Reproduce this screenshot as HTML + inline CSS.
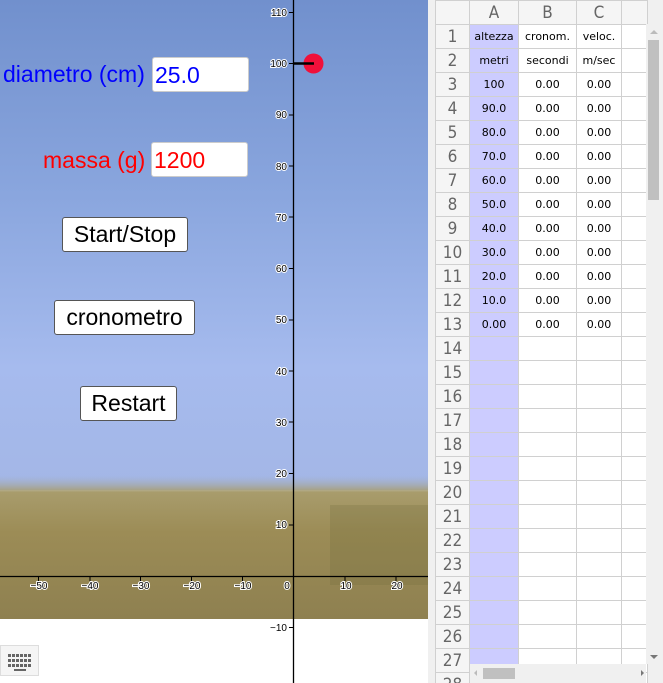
<!DOCTYPE html><html style="overflow:hidden"><head><meta charset="utf-8"><style>
html,body{margin:0;width:663px;height:683px;overflow:hidden}
body{background:#fff;font-family:"Liberation Sans",sans-serif;position:relative}
#g{position:absolute;left:0;top:0;width:428px;height:683px;overflow:hidden}
.btn{position:absolute;background:#fff;border:1px solid #555;border-radius:3px;font-size:23px;text-align:center;line-height:33px;height:33px;color:#000}
.inp{position:absolute;background:#fff;border:1px solid #ccc;border-radius:3px;height:35px;font-size:23px;line-height:35px;padding-left:2px;box-sizing:border-box}
.lab{position:absolute;font-size:23px}
#s{position:absolute;left:428px;top:0;width:235px;height:683px;background:#f0f0f0;overflow:hidden}
table{position:absolute;left:7px;top:0;border-collapse:collapse;font-family:"DejaVu Sans",sans-serif;font-size:11px;table-layout:fixed}
td{border:1px solid #d0d0d0;height:23px;padding:0;text-align:center;background:#fff;overflow:hidden;white-space:nowrap}
td.h{background:#f5f5f5;color:#666;font-size:17px;font-family:"DejaVu Sans Condensed","DejaVu Sans",sans-serif}
td.a{background:#ccccff}
</style></head><body>
<div id="g">
<svg width="428" height="683" style="position:absolute;left:0;top:0">
<defs>
<linearGradient id="sky" x1="0" y1="0" x2="0" y2="1"><stop offset="0" stop-color="#7190cd"/><stop offset="0.4" stop-color="#8aa6de"/><stop offset="0.75" stop-color="#a6bbee"/><stop offset="1" stop-color="#a3b6e6"/></linearGradient>
<linearGradient id="grass" x1="0" y1="0" x2="0" y2="1"><stop offset="0" stop-color="#a3b0c8" stop-opacity="0"/><stop offset="0.12" stop-color="#a89c6c"/><stop offset="0.4" stop-color="#9c8c56"/><stop offset="1" stop-color="#8e8050"/></linearGradient>
</defs>
<rect x="0" y="0" width="428" height="490" fill="url(#sky)"/>
<rect x="0" y="475" width="428" height="144" fill="url(#grass)"/>
<rect x="330" y="505" width="98" height="80" fill="#6f6a3c" opacity="0.25"/>
<g stroke="#000" stroke-width="1.3">
<line x1="293.5" y1="0" x2="293.5" y2="683"/>
<line x1="0" y1="576.5" x2="428" y2="576.5"/>
</g>
<g stroke="#000" stroke-width="1">
<line x1="289" y1="12.5" x2="293" y2="12.5"/><line x1="289" y1="63.5" x2="293" y2="63.5"/><line x1="289" y1="115" x2="293" y2="115"/><line x1="289" y1="166" x2="293" y2="166"/><line x1="289" y1="217" x2="293" y2="217"/><line x1="289" y1="268.5" x2="293" y2="268.5"/><line x1="289" y1="320" x2="293" y2="320"/><line x1="289" y1="371" x2="293" y2="371"/><line x1="289" y1="422" x2="293" y2="422"/><line x1="289" y1="473.5" x2="293" y2="473.5"/><line x1="289" y1="525" x2="293" y2="525"/>
<line x1="38.5" y1="577" x2="38.5" y2="581"/><line x1="90" y1="577" x2="90" y2="581"/><line x1="140.5" y1="577" x2="140.5" y2="581"/><line x1="191.5" y1="577" x2="191.5" y2="581"/><line x1="242.5" y1="577" x2="242.5" y2="581"/><line x1="345" y1="577" x2="345" y2="581"/><line x1="396" y1="577" x2="396" y2="581"/>
</g>
<g font-family="Liberation Sans" font-size="10" fill="#000" text-anchor="end" stroke="#fff" stroke-width="2" paint-order="stroke">
<text x="287" y="16">110</text><text x="287" y="67">100</text><text x="287" y="118">90</text><text x="287" y="170">80</text><text x="287" y="221">70</text><text x="287" y="272">60</text><text x="287" y="323">50</text><text x="287" y="375">40</text><text x="287" y="426">30</text><text x="287" y="477">20</text><text x="287" y="528">10</text>
</g>
<g font-family="Liberation Sans" font-size="10" fill="#000" text-anchor="middle" stroke="#fff" stroke-width="2" paint-order="stroke">
<text x="39" y="589">−50</text><text x="90" y="589">−40</text><text x="141" y="589">−30</text><text x="192" y="589">−20</text><text x="243" y="589">−10</text><text x="287" y="589">0</text><text x="346" y="589">10</text><text x="397" y="589">20</text>
</g>
<rect x="0" y="619" width="428" height="64" fill="#fff"/>
<line x1="293.5" y1="619" x2="293.5" y2="683" stroke="#000" stroke-width="1.3"/>
<line x1="289" y1="627.5" x2="293" y2="627.5" stroke="#000"/>
<text x="287" y="631" font-family="Liberation Sans" font-size="10" text-anchor="end">−10</text>
<circle cx="313.5" cy="63.5" r="10" fill="#f0103a"/>
<line x1="293" y1="63.5" x2="314" y2="63.5" stroke="#000" stroke-width="2.5"/>
<rect x="0.5" y="645.5" width="38" height="30" fill="#f5f5f5" stroke="#ddd"/>
<g fill="#666"><rect x="8" y="654" width="23" height="3"/><rect x="8" y="659" width="23" height="3"/><rect x="8" y="664" width="23" height="3"/><rect x="14" y="669" width="12" height="2"/></g>
<g stroke="#f5f5f5" stroke-width="1"><line x1="11.5" y1="653" x2="11.5" y2="668"/><line x1="15.5" y1="653" x2="15.5" y2="668"/><line x1="19.5" y1="653" x2="19.5" y2="668"/><line x1="23.5" y1="653" x2="23.5" y2="668"/><line x1="27.5" y1="653" x2="27.5" y2="668"/></g>
</svg>
<div class="lab" style="left:3px;top:61px;color:#0000ff">diametro (cm)</div>
<div class="inp" style="left:152px;top:57px;width:97px;color:#0000ff">25.0</div>
<div class="lab" style="left:43px;top:147px;color:#ff0000">massa (g)</div>
<div class="inp" style="left:151px;top:142px;width:97px;color:#ff0000">1200</div>
<div class="btn" style="left:62px;top:217px;width:124px">Start/Stop</div>
<div class="btn" style="left:54px;top:300px;width:139px">cronometro</div>
<div class="btn" style="left:80px;top:386px;width:95px">Restart</div>
</div>
<div id="s">
<table>
<colgroup><col style="width:34px"><col style="width:49px"><col style="width:58px"><col style="width:45px"><col style="width:26px"></colgroup>
<tr><td class="h"></td><td class="h">A</td><td class="h">B</td><td class="h">C</td><td class="h"></td></tr>
<tr><td class="h">1</td><td class="a">altezza</td><td>cronom.</td><td>veloc.</td><td></td></tr>
<tr><td class="h">2</td><td class="a">metri</td><td>secondi</td><td>m/sec</td><td></td></tr>
<tr><td class="h">3</td><td class="a">100</td><td>0.00</td><td>0.00</td><td></td></tr>
<tr><td class="h">4</td><td class="a">90.0</td><td>0.00</td><td>0.00</td><td></td></tr>
<tr><td class="h">5</td><td class="a">80.0</td><td>0.00</td><td>0.00</td><td></td></tr>
<tr><td class="h">6</td><td class="a">70.0</td><td>0.00</td><td>0.00</td><td></td></tr>
<tr><td class="h">7</td><td class="a">60.0</td><td>0.00</td><td>0.00</td><td></td></tr>
<tr><td class="h">8</td><td class="a">50.0</td><td>0.00</td><td>0.00</td><td></td></tr>
<tr><td class="h">9</td><td class="a">40.0</td><td>0.00</td><td>0.00</td><td></td></tr>
<tr><td class="h">10</td><td class="a">30.0</td><td>0.00</td><td>0.00</td><td></td></tr>
<tr><td class="h">11</td><td class="a">20.0</td><td>0.00</td><td>0.00</td><td></td></tr>
<tr><td class="h">12</td><td class="a">10.0</td><td>0.00</td><td>0.00</td><td></td></tr>
<tr><td class="h">13</td><td class="a">0.00</td><td>0.00</td><td>0.00</td><td></td></tr>
<tr><td class="h">14</td><td class="a"></td><td></td><td></td><td></td></tr>
<tr><td class="h">15</td><td class="a"></td><td></td><td></td><td></td></tr>
<tr><td class="h">16</td><td class="a"></td><td></td><td></td><td></td></tr>
<tr><td class="h">17</td><td class="a"></td><td></td><td></td><td></td></tr>
<tr><td class="h">18</td><td class="a"></td><td></td><td></td><td></td></tr>
<tr><td class="h">19</td><td class="a"></td><td></td><td></td><td></td></tr>
<tr><td class="h">20</td><td class="a"></td><td></td><td></td><td></td></tr>
<tr><td class="h">21</td><td class="a"></td><td></td><td></td><td></td></tr>
<tr><td class="h">22</td><td class="a"></td><td></td><td></td><td></td></tr>
<tr><td class="h">23</td><td class="a"></td><td></td><td></td><td></td></tr>
<tr><td class="h">24</td><td class="a"></td><td></td><td></td><td></td></tr>
<tr><td class="h">25</td><td class="a"></td><td></td><td></td><td></td></tr>
<tr><td class="h">26</td><td class="a"></td><td></td><td></td><td></td></tr>
<tr><td class="h">27</td><td class="a"></td><td></td><td></td><td></td></tr>
<tr><td class="h">28</td><td class="a"></td><td></td><td></td><td></td></tr>
</table>
<div style="position:absolute;left:218px;top:24px;width:15px;height:640px;background:#f0f0f0"></div>
<div style="position:absolute;left:220px;top:40px;width:11px;height:160px;background:#c0c0c0"></div>
<div style="position:absolute;left:222px;top:30px;width:0;height:0;border:4px solid transparent;border-bottom-color:#bbb;border-top:0"></div>
<div style="position:absolute;left:222px;top:655px;width:0;height:0;border:4px solid transparent;border-top-color:#777;border-bottom:0"></div>
<div style="position:absolute;left:42px;top:664px;width:176px;height:19px;background:#f0f0f0"></div>
<div style="position:absolute;left:55px;top:668px;width:32px;height:11px;background:#c0c0c0"></div>
<div style="position:absolute;left:46px;top:670px;width:0;height:0;border:3px solid transparent;border-right-color:#bbb;border-left:0"></div>
<div style="position:absolute;left:213px;top:670px;width:0;height:0;border:3px solid transparent;border-left-color:#777;border-right:0"></div>
</div>
</body></html>
